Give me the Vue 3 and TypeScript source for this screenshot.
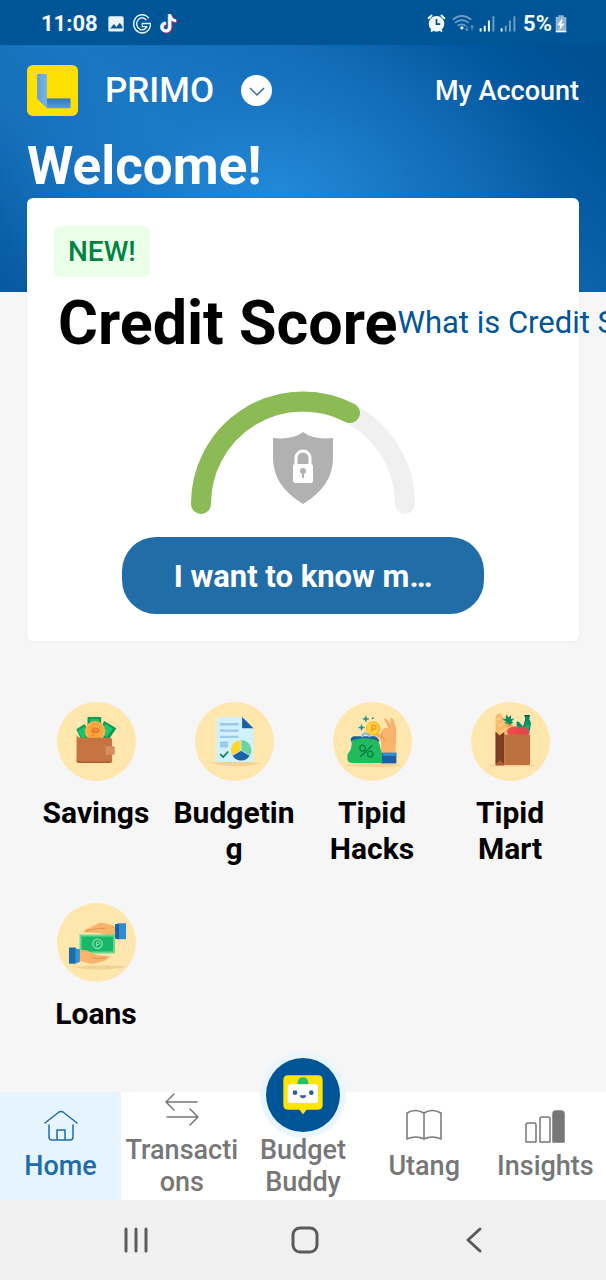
<script setup lang="ts">
import { ref } from 'vue'

interface Service { id: string; label: string; box: string }
interface Tab { id: string; label: string }

const services: Service[] = [
  { id: 'savings', label: 'Savings', box: '48 37 238 238' },
  { id: 'budgeting', label: 'Budgeting', box: '463 37 238 238' },
  { id: 'hacks', label: 'Tipid Hacks', box: '39 37 238 238' },
  { id: 'mart', label: 'Tipid Mart', box: '452 37 238 238' },
  { id: 'loans', label: 'Loans', box: '51 37 238 238' },
]

const tabs: Tab[] = [
  { id: 'home', label: 'Home' },
  { id: 'transactions', label: 'Transactions' },
  { id: 'buddy', label: 'Budget Buddy' },
  { id: 'utang', label: 'Utang' },
  { id: 'insights', label: 'Insights' },
]

const active = ref('home')
</script>

<template>
  <div class="page">
    <div class="status">
      <span class="status-text">11:08</span>
      <svg class="s-photo" viewBox="320 46 49 48" width="16" height="16" aria-hidden="true">
        <rect x="321" y="46" width="47" height="47" rx="5" fill="#eaf4ff" />
        <path d="M327 84l11-14 8 9 10-13 8 12v6z" fill="#005596" />
      </svg>
      <svg class="s-g" viewBox="397 40 52 58" width="18" height="20" fill="none" aria-hidden="true">
        <path d="M439 55a20 22 0 1 0 4 17h-21" stroke="#eaf4ff" stroke-width="13" />
        <path d="M439 55a20 22 0 1 0 4 17h-18" stroke="#005596" stroke-width="5" />
      </svg>
      <svg class="s-tok" viewBox="472 36 58 64" width="19" height="21" fill="none" stroke-width="9" aria-hidden="true">
        <path d="M505 40v40a12 12 0 1 1-12-13M505 42q3 16 19 18" stroke="#35e4e8" transform="translate(-2 -1)" />
        <path d="M505 40v40a12 12 0 1 1-12-13M505 42q3 16 19 18" stroke="#f0335f" transform="translate(3 2)" />
        <path d="M505 40v40a12 12 0 1 1-12-13M505 42q3 16 19 18" stroke="#fff" />
      </svg>
      <span class="spacer"></span>
      <svg class="s-alarm" viewBox="373 41 56 56" width="19" height="19" fill="none" aria-hidden="true">
        <circle cx="401" cy="70" r="23" fill="#f1f8ff" />
        <path d="M376 55l12-11M426 55l-12-11M385 93l5-6M417 93l-5-6" stroke="#f1f8ff" stroke-width="6" />
        <path d="M401 56v15h11" stroke="#005596" stroke-width="5" />
      </svg>
      <svg class="s-wifi" viewBox="448 40 70 56" width="23" height="19" fill="none" stroke="#6f9fc9" stroke-width="5" aria-hidden="true">
        <path d="M450 56q28-23 57 0M457 66q21-16 42 0M465 75q13-9 25 0" />
        <circle cx="478" cy="81" r="5" fill="#f1f8ff" stroke="none" />
        <path d="M493 77v13m-5-6l5 6 5-6M509 89V74m-5 6l5-6 5 6" stroke-width="3" />
      </svg>
      <svg class="s-sig" viewBox="527 43 50 52" width="16" height="17" aria-hidden="true">
        <path d="M529 84h6v10h-6zM542 76h6v18h-6zM555 60h6v34h-6z" fill="#f1f8ff" />
        <path d="M569 46h6v48h-6z" fill="#6f9fc9" />
      </svg>
      <svg class="s-sig2" viewBox="590 43 50 52" width="16" height="17" aria-hidden="true">
        <path d="M592 84h6v10h-6z" fill="#f1f8ff" />
        <path d="M605 76h6v18h-6zM618 60h6v34h-6zM632 46h6v48h-6z" fill="#6f9fc9" />
      </svg>
      <span class="status-text">5%</span>
      <svg class="s-bat" viewBox="754 42 36 54" width="12" height="18" aria-hidden="true">
        <path d="M764 43h16v5h8v40h-32V48h8z" fill="#8fb4d6" />
        <path d="M756 88h32v6h-32z" fill="#f1f8ff" />
        <path d="M775 53l-14 20h9l-3 15 15-20h-9l4-14z" fill="#fff" />
      </svg>
    </div>

    <main class="main">
      <header class="header">
        <svg class="logo" viewBox="81 195 151 151" aria-hidden="true">
          <defs>
            <linearGradient id="stem" x1="0" y1="0" x2="1" y2="0">
              <stop offset="0" stop-color="#5aa0dc" /><stop offset="1" stop-color="#7ab4e4" />
            </linearGradient>
            <linearGradient id="foot" x1="0" y1="0" x2="0" y2="1">
              <stop offset="0" stop-color="#2f74b8" /><stop offset="1" stop-color="#5c9fdc" />
            </linearGradient>
          </defs>
          <rect x="81" y="195" width="151" height="151" rx="17" fill="#fee000" />
          <path d="M111 222h29v101l-29-28z" fill="url(#stem)" />
          <path d="M140 294h70v29h-70z" fill="url(#foot)" />
        </svg>
        <span class="name">PRIMO</span>
        <button class="switch" type="button" aria-label="Switch account">
          <svg viewBox="0 0 30 30" width="30" height="30" fill="none" stroke="#2f6fa6" stroke-width="1.500" aria-hidden="true"><path d="M8 12l7 7 7-7" /></svg>
        </button>
        <a class="account" href="#account">My Account</a>
      </header>
      <h1 class="welcome">Welcome!</h1>

      <section class="card">
        <span class="badge">NEW!</span>
        <div class="title-row">
          <h2 class="title">Credit Score</h2>
          <a class="what" href="#credit-score">What is Credit Score?</a>
        </div>
        <svg class="gauge" viewBox="0 0 226 126" width="226" height="126" fill="none" aria-hidden="true">
          <path d="M11 114a102 102 0 0 1 204 0" stroke="#f0f0f0" stroke-width="20" stroke-linecap="round" />
          <path d="M11 114a102 102 0 0 1 149-91" stroke="#8cba54" stroke-width="20" stroke-linecap="round" />
          <path d="M113 42q-10 8-30 6v20q0 28 30 46 30-18 30-46V48q-20 2-30-6z" fill="#b1b1b1" />
          <rect x="103" y="74" width="20" height="19" rx="2" fill="#fff" />
          <path d="M106 74v-6a7 7 0 0 1 14 0v6" stroke="#fff" stroke-width="3" />
          <circle cx="113" cy="81" r="3" fill="#b1b1b1" />
          <path d="M113 82v6" stroke="#b1b1b1" stroke-width="2" />
        </svg>
        <button class="cta" type="button">I want to know m…</button>
      </section>

      <nav class="services" aria-label="Services">
        <a v-for="s in services" :key="s.id" class="service" :href="'#' + s.id">
          <svg class="pic" :viewBox="s.box" aria-hidden="true">
            <g v-if="s.id === 'savings'">
              <circle cx="167" cy="156" r="119" fill="#ffe6ad" />
              <ellipse cx="160" cy="218" rx="62" ry="5" fill="#f4d596" />
              <path d="M106 119l25-16 22 38-28 17z" fill="#119e59" />
              <path d="M112 123l20-12 12 24-20 13z" fill="#21c06b" />
              <path d="M140 82h41v55h-41z" fill="#0e9b54" />
              <path d="M147 88h28v30h-28z" fill="#23bd68" />
              <path d="M190 94l37 22-27 40-29-18z" fill="#0e9b54" />
              <path d="M194 103l22 14-18 26-19-12z" fill="#23c370" />
              <circle cx="163" cy="125" r="31" fill="#f8b14c" />
              <circle cx="163" cy="125" r="24" fill="#ffa53c" />
              <path d="M157 139v-23h8q9 0 9 7t-9 7h-8M151 121h26M151 126h26" fill="none" stroke="#dd762c" stroke-width="3" />
              <path d="M107 136q2 9 15 9h85q7 0 7 7v60q0 9-9 9h-89q-9 0-9-9z" fill="#c57442" />
              <path d="M107 208q2 8 9 8h89q9 0 9-7v3q0 9-9 9h-89q-9 0-9-9z" fill="#aa5f34" />
              <rect x="194" y="170" width="28" height="26" rx="4" fill="#d88c61" />
              <path d="M114 97v10m-5-5h10M222 130v8m-4-4h8" stroke="#fff7dd" stroke-width="3" />
            </g>
            <g v-else-if="s.id === 'budgeting'">
              <circle cx="582" cy="156" r="119" fill="#ffe6ad" />
              <path d="M508 221q75-8 157 0-75 20-157 0z" fill="#f2d395" />
              <path d="M536 82h69l34 34v94q0 8-8 8h-96q-7 0-7-8V90q0-8 8-8z" fill="#d0f1ff" />
              <path d="M605 82l34 34h-34z" fill="#1660a5" />
              <path d="M538 104h56M538 123h56M538 142h56" stroke="#9bc9e8" stroke-width="7" />
              <rect x="538" y="156" width="24" height="18" fill="#9bc9e8" />
              <path d="M539 194l9 9 15-17" fill="none" stroke="#08804a" stroke-width="5" />
              <path d="M602 183v-31a30 30 0 0 0-26 46z" fill="#ffd72f" />
              <path d="M602 183v-31a30 30 0 0 1 26 46z" fill="#6bd39b" />
              <path d="M602 183l26 15a30 30 0 0 1-52 0z" fill="#1b61a5" />
              <path d="M602 152v31l26 15M602 183l-26 15" fill="none" stroke="#d0f1ff" stroke-width="2" />
            </g>
            <g v-else-if="s.id === 'hacks'">
              <circle cx="158" cy="156" r="119" fill="#ffe6ad" />
              <ellipse cx="162" cy="228" rx="82" ry="5" fill="#f2d395" />
              <path d="M184 192v-38l-20-20q-7-12 3-11l16 12q0-12 10-18 8-5 17-2l-18-26q4-6 11 2l11 12-3-16q6-5 10 3l8 25v40l-2 37z" fill="#f8b36c" />
              <path d="M185 132q-4 12 12 20M210 115l-9-12" stroke="#e18f4c" stroke-width="3" fill="none" />
              <circle cx="160" cy="117" r="22" fill="#f8b52d" />
              <circle cx="158" cy="116" r="18" fill="#ffd33b" />
              <path d="M156 127v-20h5q8 0 8 6t-8 6h-7" fill="none" stroke="#e99b26" stroke-width="4" />
              <path d="M182 190h48v32h-48z" fill="#1d5da8" />
              <path d="M188 190h42v9h-42z" fill="#3490d4" />
              <path d="M92 151q2-11 11-11h60q9 0 16 15l-5 4q-35-17-78 1z" fill="#1662a5" />
              <path d="M126 143q2-10 11-12 9 2 13 12" fill="none" stroke="#87bae1" stroke-width="6" />
              <path d="M96 153q35-12 72-2 11 5 14 27 5 9 5 43H98q-17 0-16-17 0-12 8-20 5-6 6-31z" fill="#21bb5e" />
              <path d="M120 203l38-36" stroke="#087d43" stroke-width="4" />
              <ellipse cx="128" cy="176" rx="8" ry="9" fill="none" stroke="#087d43" stroke-width="4" />
              <ellipse cx="151" cy="194" rx="8" ry="9" fill="none" stroke="#087d43" stroke-width="4" />
              <path d="M138 79q0 9 9 9-9 0-9 9 0-9-9-9 9 0 9-9zM125 105q0 9 9 9-9 0-9 9 0-9-9-9 9 0 9-9z" fill="#17908d" stroke="#17908d" stroke-width="2" />
              <circle cx="159" cy="86" r="3" fill="#17908d" />
            </g>
            <g v-else-if="s.id === 'mart'">
              <circle cx="571" cy="156" r="119" fill="#ffe6ad" />
              <ellipse cx="576" cy="228" rx="69" ry="4" fill="#f2d395" />
              <path d="M526 79q7-11 17-5l23 39-14 30-26-8z" fill="#f7bd6e" />
              <path d="M530 88q8 5 12-3M535 106q12 3 15-8M540 127q13-1 19-12" fill="none" stroke="#ffe1a0" stroke-width="3" />
              <path d="M561 108l-8-10 7 1-14-12 11 1q-2-8 3-13l4 9 9-8-1 12 11-1-9 9 6 2-13 10z" fill="#078d67" />
              <path d="M558 102l9 8 10-5" stroke="#f49a36" stroke-width="7" fill="none" />
              <path d="M590 101q-4-7 5-5l14 14 6-20-1-14h15l-1 14q7 10 3 22l-4 22-24-4q-14-12-14-29z" fill="#078b66" />
              <path d="M613 76h16v5h-16z" fill="#075e59" />
              <path d="M615 105h14v13h-15z" fill="#17a477" />
              <ellipse cx="584" cy="127" rx="24" ry="17" fill="#ef4b4d" />
              <ellipse cx="607" cy="127" rx="20" ry="16" fill="#e5474d" />
              <path d="M590 114l5-4 4 7" stroke="#4a9951" stroke-width="3" fill="none" />
              <path d="M526 127l12 11 14-10v99h-26z" fill="#8d4827" />
              <path d="M526 127l12 11v76l-12 12zM539 138l13-10v99l-13-13z" fill="#6d3720" opacity=".6" />
              <path d="M552 135h78v88q0 4-4 4h-74z" fill="#bd713f" />
              <path d="M530 220l10-8 12 12v4h-26z" fill="#a75e36" />
            </g>
            <g v-else>
              <circle cx="170" cy="156" r="119" fill="#ffe6ad" />
              <path d="M93 229q83-9 169-1-80 20-169 1z" fill="#f2d395" />
              <path d="M134 118l43-20q8-4 20 1l29 7v29q-24 6-40-6-23-3-51-3-4-5-1-8z" fill="#f8b36c" />
              <path d="M139 121l40-8 16 1" stroke="#e19350" stroke-width="3" fill="none" />
              <path d="M119 132h107v57H119z" fill="#68d98f" />
              <path d="M125 138h95v45h-95z" fill="#18b769" />
              <circle cx="173" cy="160" r="14" fill="none" stroke="#86dfae" stroke-width="4" />
              <path d="M170 168v-14h5q6 0 6 4t-6 4h-7" fill="none" stroke="#86dfae" stroke-width="3" />
              <path d="M118 180q18-6 34 6 20 10 58 12 0 7-27 17-20 7-35 4l-30-8z" fill="#f8b36c" />
              <path d="M154 201q15 6 45 0" stroke="#e19350" stroke-width="3" fill="none" />
              <path d="M226 101l13-3v49l-13-3z" fill="#1760a0" /><path d="M238 98h21v48h-21z" fill="#308bd0" />
              <path d="M87 171h21v49H87z" fill="#1b6dab" /><path d="M107 174l13 2v39l-13 4z" fill="#3594d5" />
            </g>
          </svg>
          <span class="service-label">{{ s.label }}</span>
        </a>
      </nav>
    </main>

    <nav class="tabs" aria-label="Main">
      <button v-for="t in tabs" :key="t.id" type="button" class="tab" :class="{ active: active === t.id }" @click="active = t.id">
        <span v-if="t.id === 'buddy'" class="bubble">
          <svg viewBox="78 53 222 222" width="74" height="74" aria-hidden="true">
            <path d="M144 105h90q14 0 14 14v75q0 14-14 14h-34l-11 14-11-14h-34q-14 0-14-14v-75q0-14 14-14z" fill="#fde500" />
            <path d="M173 134v-8q2-15 16-15t16 15v8z" fill="#29bf69" />
            <rect x="143" y="132" width="91" height="56" rx="8" fill="#fff" />
            <circle cx="165" cy="157" r="7" fill="#315b9b" /><circle cx="214" cy="157" r="7" fill="#315b9b" />
            <path d="M179 165h20q-2 9-10 9t-10-9z" fill="#315b9b" />
          </svg>
        </span>
        <svg v-else class="tab-icon" viewBox="0 2 42 36" fill="none" stroke="currentColor" stroke-width="1.500" stroke-linecap="round" stroke-linejoin="round" aria-hidden="true">
          <g v-if="t.id === 'home'">
            <path d="M5 16L19 5q2-1 4 0l14 11M9 18v12q0 3 3 3h18q3 0 3-3V18M17 33V23h8v10" />
          </g>
          <g v-else-if="t.id === 'transactions'">
            <path d="M36 11H5M13 3L5 11l8 8M6 26h31M29 18l8 8-8 8" />
          </g>
          <g v-else-if="t.id === 'utang'">
            <path d="M21 6Q12 1 4 6v26q9-4 17 0 8-4 17 0V6q-9-5-17 0zM21 6v26" />
          </g>
          <g v-else>
            <path d="M2 35V18q0-2 2-2h6q2 0 2 2v17zM16 35V12q0-2 2-2h6q2 0 2 2v23z" />
            <path d="M29 35V7q0-3 3-3h5q3 0 3 3v28z" fill="currentColor" />
          </g>
        </svg>
        <span class="tab-label">{{ t.label }}</span>
      </button>
    </nav>

    <div class="system">
      <button type="button" aria-label="Recent apps">
        <svg viewBox="0 0 30 30" width="30" height="30" fill="none" stroke="#5b5b5b" stroke-width="3" stroke-linecap="round"><path d="M5 4v22M15 4v22M25 4v22" /></svg>
      </button>
      <button type="button" aria-label="Home screen">
        <svg viewBox="0 0 30 30" width="30" height="30" fill="none" stroke="#5b5b5b" stroke-width="3"><rect x="3" y="3" width="24" height="24" rx="7" /></svg>
      </button>
      <button type="button" aria-label="Back">
        <svg viewBox="0 0 30 30" width="30" height="30" fill="none" stroke="#5b5b5b" stroke-width="3" stroke-linecap="round" stroke-linejoin="round"><path d="M21 4L9 15l12 11" /></svg>
      </button>
    </div>
  </div>
</template>

<style>
body { margin: 0; background: #f6f6f6; }
</style>

<style scoped>
* { box-sizing: border-box; }
.page {
  display: flex;
  flex-direction: column;
  min-height: 100vh;
  overflow-x: hidden;
  font-family: Roboto, "Liberation Sans", sans-serif;
  background: #f6f6f6;
  color: #000;
}
a { color: inherit; text-decoration: none; }
button { font: inherit; border: 0; padding: 0; background: none; cursor: pointer; color: inherit; }
svg { display: block; flex: none; }
.status {
  display: flex;
  align-items: center;
  height: 45px;
  padding: 2px 39px 0 41px;
  background: #005596;
  color: #f1f8ff;
}
.status-text { font-size: 22px; line-height: 28px; font-weight: 700; }
.s-photo { margin-left: 10px; }
.s-g { margin-left: 9px; }
.s-tok { margin-left: 8px; }
.spacer { flex: 1; }
.s-wifi { margin-left: 6px; }
.s-sig { margin-left: 4px; }
.s-sig2 { margin: 0 7px 0 5px; }
.s-bat { margin-left: 3px; }
.main {
  flex: 1;
  padding: 20px 27px 32px;
  background:
    radial-gradient(ellipse 280px 190px at 46% 150px, rgba(36, 142, 224, 0.8), rgba(30, 128, 208, 0.4) 50%, rgba(26, 120, 200, 0)) no-repeat 0 0 / 100% 247px,
    linear-gradient(225deg, #004f90 0%, #00549a 12%, #1169b3 38%, #1a76c1 62%, #1670ba 78%, #0658a0 100%) no-repeat 0 0 / 100% 247px;
}
.header { display: flex; align-items: center; height: 51px; color: #fff; }
.logo { width: 51px; height: 51px; }
.name { margin-left: 27px; font-size: 35px; line-height: 42px; font-weight: 500; }
.switch { display: grid; place-items: center; width: 31px; height: 31px; margin-left: 27px; border-radius: 50%; background: #fff; }
.account { margin-left: auto; font-size: 27px; line-height: 32px; font-weight: 500; }
.welcome { margin: 18px 0 0; font-size: 53px; line-height: 64px; font-weight: 700; color: #fff; }
.card {
  display: flex;
  flex-direction: column;
  align-items: flex-start;
  padding: 28px 27px 27px;
  border-radius: 6px;
  background: #fff;
  box-shadow: 0 0 4px rgba(0, 0, 0, 0.06);
}
.badge { padding: 8px 14px; border-radius: 6px; background: #ebffe8; color: #008244; font-size: 28px; line-height: 35px; font-weight: 500; }
.title-row { display: flex; align-items: center; margin: 10px 0 0 4px; white-space: nowrap; }
.title { margin: 0; font-size: 61px; line-height: 72px; font-weight: 700; }
.what { font-size: 31px; line-height: 36px; color: #005596; }
.gauge { align-self: center; margin-top: 31px; }
.cta {
  align-self: center;
  width: 362px;
  max-width: 100%;
  height: 77px;
  margin-top: 21px;
  padding-top: 2px;
  border-radius: 34px;
  background: #216da8;
  color: #fff;
  font-size: 31px;
  font-weight: 700;
  white-space: nowrap;
}
.services { display: grid; grid-template-columns: repeat(4, 1fr); row-gap: 36px; margin-top: 61px; }
.service { display: flex; flex-direction: column; align-items: center; padding: 0 4px; text-align: center; }
.pic { width: 79px; height: 79px; }
.service-label { width: 100%; margin-top: 14px; font-size: 30px; line-height: 36px; font-weight: 700; overflow-wrap: anywhere; }
.tabs { display: grid; grid-template-columns: repeat(5, 1fr); height: 108px; background: #fff; color: #777; }
.tab { position: relative; display: flex; flex-direction: column; align-items: center; justify-content: center; min-width: 0; padding: 0 4px 2px; }
.tab.active { background: #e5f4ff; color: #216ca7; }
.tab-icon { width: 42px; height: 36px; margin-bottom: 5px; }
.tab-label { width: 100%; font-size: 27px; line-height: 32px; font-weight: 500; overflow-wrap: anywhere; }
.bubble {
  position: absolute;
  top: -34px;
  left: 50%;
  margin-left: -37px;
  border-radius: 50%;
  background: #005596;
  box-shadow: 0 0 0 6px #e9f5ff;
}
.bubble + .tab-label { margin-top: 41px; }
.system { display: grid; grid-template-columns: repeat(3, 1fr); height: 80px; padding: 0 48px 0 52px; background: #f0f0f0; }
.system button { display: grid; place-items: center; }
</style>
